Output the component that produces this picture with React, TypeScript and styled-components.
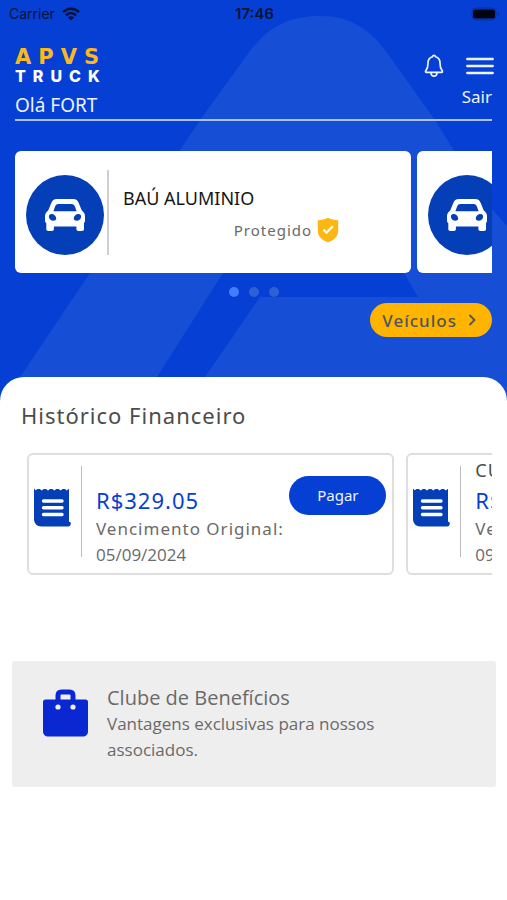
import React from "react";
import styled, { createGlobalStyle } from "styled-components";

const colors = {
  brand: "#053fd3",
  brandLight: "#164fd6",
  deep: "#043fb8",
  amber: "#ffb400",
  heading: "#4c4c4c",
  body: "#6a6a6a",
  rule: "#cfcfcf",
  border: "#dedede",
};

const GlobalStyle = createGlobalStyle`
  * { box-sizing: border-box; }
  body { margin: 0; background: #fff; font-family: "Noto Sans", "Open Sans", sans-serif; }
  h2, h3, p { margin: 0; font-weight: 400; }
  button { font: inherit; border: 0; padding: 0; background: none; cursor: pointer; }
  svg { display: block; flex: none; }
`;

const Page = styled.div`
  display: flex;
  flex-direction: column;
  min-height: 100vh;
  position: relative;
  background: ${colors.brand};
`;

const Backdrop = styled.svg`
  position: absolute;
  top: 0;
  left: 0;
  width: 100%;
  height: auto;
`;

const StatusBar = styled.div`
  position: relative;
  display: grid;
  grid-template-columns: 1fr auto 1fr;
  align-items: center;
  height: 28px;
  padding: 0 7px 0 9px;
  color: #051238;
  font: 400 14px/20px Inter, sans-serif;
`;

const Carrier = styled.div`
  display: flex;
  align-items: center;
  gap: 7px;
`;

const Clock = styled.time`
  font-size: 15px;
  font-weight: 600;
`;

const BatterySlot = styled.div`
  justify-self: end;
`;

const Hero = styled.div`
  position: relative;
  padding: 0 15px 40px;
`;

const Header = styled.header`
  display: flex;
  justify-content: space-between;
  align-items: flex-end;
  height: 93px;
  padding-bottom: 1px;
  border-bottom: 2px solid #a9c3f5;
  color: #edf3ff;
`;

const Logo = styled.div`
  display: flex;
  flex-direction: column;
`;

const LogoName = styled.span`
  color: #fbb91d;
  font: 700 21px/20px "DejaVu Sans", sans-serif;
  letter-spacing: 7px;
`;

const LogoLine = styled.span`
  color: #fff;
  font: 800 16px/18px Inter, sans-serif;
  letter-spacing: 7px;
`;

const Greeting = styled.p`
  font-size: 19px;
  line-height: 26px;
  margin-top: 7px;
`;

const Account = styled.div`
  display: flex;
  flex-direction: column;
  align-items: flex-end;
  gap: 7px;
  padding-bottom: 9px;
`;

const IconRow = styled.div`
  display: flex;
  align-items: center;
  gap: 22px;
  margin-right: -2px;
`;

const IconButton = styled.button`
  color: inherit;
`;

const SignOut = styled.button`
  color: inherit;
  font-size: 17px;
  line-height: 24px;
`;

const Carousel = styled.div<{ $gap: number }>`
  display: flex;
  gap: ${(p) => p.$gap}px;
  overflow-x: auto;
  scrollbar-width: none;
`;

const VehicleCard = styled.article`
  flex: 0 0 83%;
  display: flex;
  align-items: center;
  height: 122px;
  padding: 0 11px;
  border-radius: 6px;
  background: #fff;
`;

const Disc = styled.div`
  display: grid;
  place-items: center;
  flex: none;
  width: 78px;
  height: 80px;
  margin-top: 6px;
  border-radius: 50%;
  background: ${colors.deep};
`;

const Rule = styled.div<{ $height: number }>`
  flex: none;
  width: 2px;
  height: ${(p) => p.$height}px;
  background: ${colors.rule};
`;

const VehicleRule = styled(Rule)`
  margin: 0 14px 0 3px;
`;

const VehicleInfo = styled.div`
  flex: 1;
  display: flex;
  flex-direction: column;
  gap: 6px;
  padding-top: 4px;
`;

const VehicleName = styled.h3`
  color: #161616;
  font-size: 18px;
  line-height: 26px;
`;

const Protection = styled.div`
  display: flex;
  align-items: center;
  justify-content: center;
  gap: 5px;
  padding-left: 50px;
  color: ${colors.body};
  font-size: 15px;
  line-height: 26px;
  letter-spacing: 1px;
`;

const Dots = styled.div`
  display: flex;
  justify-content: center;
  gap: 10px;
  padding: 14px 0 6px;
`;

const Dot = styled.button<{ $active?: boolean }>`
  width: 10px;
  height: 10px;
  border-radius: 50%;
  background: ${(p) => (p.$active ? "#417fff" : "#2d60d5")};
`;

const VehiclesButton = styled.button`
  display: flex;
  align-items: center;
  gap: 11px;
  height: 34px;
  margin-left: auto;
  padding: 0 16px 0 12px;
  border-radius: 17px;
  background: ${colors.amber};
  color: #4f545a;
  font-size: 17px;
  font-weight: 500;
  letter-spacing: 1px;
`;

const Sheet = styled.main`
  position: relative;
  flex: 1;
  padding: 22px 11px 24px 12px;
  border-radius: 24px 24px 0 0;
  background: #fff;
`;

const SectionTitle = styled.h2`
  padding-left: 9px;
  color: ${colors.heading};
  font-size: 22px;
  line-height: 32px;
  letter-spacing: 1px;
`;

const Invoices = styled.section`
  padding: 22px 4px 0 15px;
`;

const InvoiceCard = styled.article`
  flex: 0 0 79%;
  display: flex;
  align-items: center;
  height: 122px;
  padding: 0 6px 0 5px;
  border: 2px solid ${colors.border};
  border-radius: 6px;
  position: relative;
`;

const ReceiptSlot = styled.div`
  padding-bottom: 14px;
`;

const InvoiceRule = styled(Rule)`
  width: 1px;
  margin: 0 14px 6px 10px;
  background: #bcbcbc;
`;

const InvoiceInfo = styled.div`
  display: flex;
  flex-direction: column;
  padding-bottom: 4px;
  color: ${colors.body};
  white-space: nowrap;
`;

const InvoiceKind = styled.p`
  min-height: 28px;
  color: ${colors.heading};
  font-size: 18px;
  line-height: 28px;
  letter-spacing: 1px;
`;

const Amount = styled.p`
  color: ${colors.brand};
  font-size: 22px;
  line-height: 32px;
  letter-spacing: 1px;
`;

const DueLabel = styled.p`
  font-size: 17px;
  line-height: 26px;
  letter-spacing: 1px;
`;

const DueDate = styled.p`
  font-family: "Open Sans", sans-serif;
  font-size: 17px;
  line-height: 26px;
`;

const PayButton = styled.button`
  position: absolute;
  top: 21px;
  right: 6px;
  width: 97px;
  height: 39px;
  padding-bottom: 2px;
  border-radius: 20px;
  background: ${colors.brand};
  color: #eef3ff;
  font-size: 15px;
`;

const Benefits = styled.a`
  display: flex;
  align-items: flex-start;
  gap: 19px;
  margin-top: 86px;
  padding: 24px 31px 24px;
  border-radius: 3px;
  background: #eee;
  color: ${colors.body};
  font-family: "Open Sans", sans-serif;
  text-decoration: none;
  svg { margin-top: 4px; }
`;

const BenefitsCopy = styled.div`
  max-width: 290px;
  font-size: 17px;
  line-height: 26px;
`;

const BenefitsTitle = styled.h3`
  font-size: 20px;
  line-height: 26px;
`;

const WifiIcon = () => (
  <svg width="18" height="14" viewBox="0 0 18 14" fill="none" stroke="#051238" strokeWidth="2.4">
    <path d="M1 5.1C5.6.6 12.4.6 17 5.1" />
    <path d="M4 8.4c2.9-2.8 7.1-2.8 10 0" />
    <path d="M9 13.6 5.9 10.4c1.8-1.6 4.4-1.6 6.2 0Z" fill="#051238" stroke="none" />
  </svg>
);

const BatteryIcon = () => (
  <svg width="29" height="14" viewBox="0 0 29 14">
    <rect x="1" y="1" width="24" height="12" rx="4" fill="none" stroke="#062f9f" />
    <rect x="2" y="2.5" width="22" height="9" rx="2.5" fill="#000511" />
    <path d="M27 5c1.5.6 1.5 3.4 0 4Z" fill="#062f9f" />
  </svg>
);

const BellIcon = () => (
  <svg width="20" height="24" viewBox="0 0 20 24" fill="none" stroke="currentColor" strokeWidth="1.7" strokeLinecap="round" strokeLinejoin="round">
    <path d="M10 1.3c-.9 0-1.4.6-1.6 1.5C5.4 3.6 4 6 4 9.2c0 4.2-.7 5.6-2 7.2-.8 1-.6 2 .5 2h15c1.1 0 1.3-1 .5-2-1.3-1.6-2-3-2-7.2 0-3.2-1.4-5.6-4.4-6.4C11.4 1.9 10.9 1.3 10 1.3Z" />
    <path d="M6.9 18.6c.2 2.3 1.4 3.5 3.1 3.5s2.9-1.2 3.1-3.5" />
  </svg>
);

const MenuIcon = () => (
  <svg width="28" height="18" viewBox="0 0 28 18" stroke="currentColor" strokeWidth="2.4" strokeLinecap="round">
    <path d="M1.3 2h25.4M1.3 9h25.4M1.3 16h25.4" />
  </svg>
);

const CarIcon = () => (
  <svg width="40" height="34" viewBox="0 0 40 34">
    <path fill="#fff" fillRule="evenodd" d="M12 1h16c3.2 0 4.7 1.5 5.7 3.9l3.1 7.6c2 1.4 3.2 3.3 3.2 6v4.2c0 1-.3 1.8-1 2.4v5.9c0 1.3-.7 2-2 2h-3.6c-1.3 0-2-.7-2-2V28.5H8.9V31c0 1.3-.7 2-2 2H3.3c-1.3 0-2-.7-2-2v-5.9C.4 24.5 0 23.7 0 22.7v-4.2c0-2.7 1.2-4.6 3.2-6l3.1-7.6C7.3 2.5 8.8 1 12 1Zm1.5 5c-1.7 0-2.6.7-3.2 2l-1.900 5.200h23.200L29.700 8c-.6-1.300-1.500-2-3.200-2ZM3.900 18.500c0 2.600 1.900 4.200 4.600 4.200 1.700 0 2.700-.8 2.700-2.100 0-2.500-2.400-4.600-4.800-4.600-1.700 0-2.500 1-2.500 2.500Zm32.200 0c0-1.500-.8-2.500-2.500-2.500-2.400 0-4.800 2.100-4.800 4.600 0 1.300 1 2.100 2.700 2.100 2.700 0 4.600-1.600 4.600-4.200Z" />
  </svg>
);

const ShieldIcon = () => (
  <svg width="22" height="26" viewBox="0 0 22 26">
    <path d="M11 .8c3.2 1.6 6.2 2.2 10.2 2.4V14c0 5.3-3.9 9.1-10.2 11.3C4.7 23.1.8 19.3.8 14V3.2C4.8 3 7.8 2.4 11 .8Z" fill="#fdb714" />
    <path d="m6.500 12.600 3 3.100 6.200-6.500" fill="none" stroke="#fff" strokeWidth="2.3" />
  </svg>
);

const ChevronIcon = () => (
  <svg width="8" height="12" viewBox="0 0 8 12" fill="none" stroke="currentColor" strokeWidth="1.8">
    <path d="m1.500 1 5 5-5 5" />
  </svg>
);

const ReceiptIcon = () => (
  <svg width="37" height="39" viewBox="0 0 37 39">
    <path fill={colors.deep} d="M0 .6 1.700 2.300 3.600.9h2.200l2 1.500 2-1.500H12l2 1.500 2-1.500h2.300l2 1.500 2-1.500h2.300l2 1.500 2-1.500h2.300l1.900 1.500 2.200-1.700V33c0 .6.400 1 1 1 1.300 0 1.300 4.500-2 4.500H7.500C3 38.500 0 35.500 0 31Z" />
    <path d="M9.500 13h18.500M9.500 19.700h18.500M9.500 26.500h18.500" stroke="#fff" strokeWidth="3.4" strokeLinecap="round" />
  </svg>
);

const BagIcon = () => (
  <svg width="45" height="48" viewBox="0 0 45 48">
    <path d="M15 12V6.500c0-2.500 1-3.500 3.500-3.500h8c2.500 0 3.500 1 3.500 3.500V12" fill="none" stroke="#0a28d2" strokeWidth="5" />
    <path d="M2.500 10.500h40c1.600 0 2.500.9 2.500 2.500v29c0 3.600-2 5.500-5.500 5.500h-34C2 47.500 0 45.600 0 42V13c0-1.600.9-2.500 2.500-2.500Z" fill="#0a28d2" />
    <circle cx="15" cy="18" r="2.6" fill="#eee" />
    <circle cx="30" cy="18" r="2.6" fill="#eee" />
  </svg>
);

const vehicles = [
  { id: 1, name: "BAÚ ALUMINIO", status: "Protegido" },
  { id: 2, name: "BAÚ ALUMINIO", status: "Protegido" },
];

const invoices = [
  { id: 1, kind: "", amount: "R$329.05", due: "05/09/2024" },
  { id: 2, kind: "CUSTO", amount: "R$329.05", due: "09/08/2024" },
];

const Vehicles = styled.section`
  padding-top: 30px;
`;

function VehicleSection() {
  return (
    <Vehicles>
      <Carousel $gap={6}>
        {vehicles.map((vehicle) => (
          <VehicleCard key={vehicle.id}>
            <Disc>
              <CarIcon />
            </Disc>
            <VehicleRule $height={85} />
            <VehicleInfo>
              <VehicleName>{vehicle.name}</VehicleName>
              <Protection>
                {vehicle.status}
                <ShieldIcon />
              </Protection>
            </VehicleInfo>
          </VehicleCard>
        ))}
      </Carousel>
      <Dots>
        <Dot $active aria-label="Veículo 1" />
        <Dot aria-label="Veículo 2" />
        <Dot aria-label="Veículo 3" />
      </Dots>
      <VehiclesButton>
        Veículos <ChevronIcon />
      </VehiclesButton>
    </Vehicles>
  );
}

export default function App() {
  return (
    <>
      <GlobalStyle />
      <Page>
        <Backdrop viewBox="0 0 507 402" aria-hidden="true">
          <path
            fill={colors.brandLight}
            d="M3 402 20 377 90 273 180 150 200 120 250 51C269 26 290 16 320 16s49 13 65 34l50 70 50 81 22 25v176Z"
          />
          <path fill={colors.brand} d="M140 402 157 377 223 273 315 155 404 273 418 297H260L205 377 188 402Z" />
        </Backdrop>
        <StatusBar>
          <Carrier>
            Carrier <WifiIcon />
          </Carrier>
          <Clock>17:46</Clock>
          <BatterySlot>
            <BatteryIcon />
          </BatterySlot>
        </StatusBar>
        <Hero>
          <Header>
            <div>
              <Logo>
                <LogoName>APVS</LogoName>
                <LogoLine>TRUCK</LogoLine>
              </Logo>
              <Greeting>Olá FORT</Greeting>
            </div>
            <Account>
              <IconRow>
                <IconButton aria-label="Notificações">
                  <BellIcon />
                </IconButton>
                <IconButton aria-label="Menu">
                  <MenuIcon />
                </IconButton>
              </IconRow>
              <SignOut>Sair</SignOut>
            </Account>
          </Header>
          <VehicleSection />
        </Hero>
        <Sheet>
          <SectionTitle>Histórico Financeiro</SectionTitle>
          <Invoices>
            <Carousel $gap={12}>
              {invoices.map((invoice) => (
                <InvoiceCard key={invoice.id}>
                  <ReceiptSlot>
                    <ReceiptIcon />
                  </ReceiptSlot>
                  <InvoiceRule $height={91} />
                  <InvoiceInfo>
                    <InvoiceKind>{invoice.kind}</InvoiceKind>
                    <Amount>{invoice.amount}</Amount>
                    <DueLabel>Vencimento Original:</DueLabel>
                    <DueDate>{invoice.due}</DueDate>
                  </InvoiceInfo>
                  <PayButton>Pagar</PayButton>
                </InvoiceCard>
              ))}
            </Carousel>
          </Invoices>
          <Benefits href="#beneficios">
            <BagIcon />
            <BenefitsCopy>
              <BenefitsTitle>Clube de Benefícios</BenefitsTitle>
              <p>Vantagens exclusivas para nossos associados.</p>
            </BenefitsCopy>
          </Benefits>
        </Sheet>
      </Page>
    </>
  );
}
